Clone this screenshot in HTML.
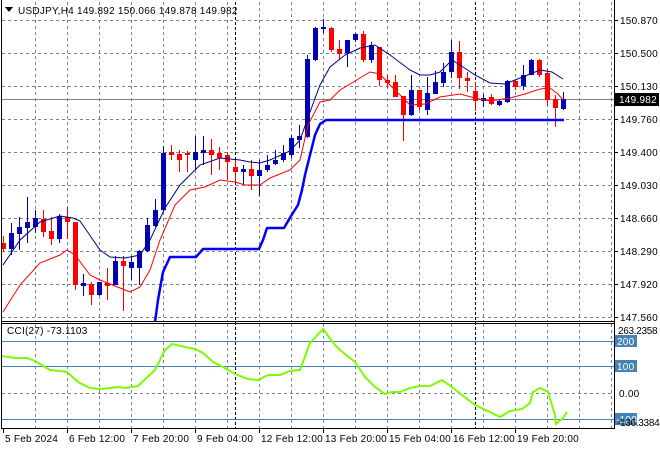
<!DOCTYPE html><html><head><meta charset="utf-8"><style>
html,body{margin:0;padding:0;background:#fff;width:660px;height:450px;overflow:hidden}
svg{display:block}
text{font-family:"Liberation Sans",sans-serif;font-size:10px;letter-spacing:0.25px;fill:#000}
text.n{letter-spacing:-0.3px}
</style></head><body>
<svg id="s" width="660" height="450" xmlns="http://www.w3.org/2000/svg" shape-rendering="crispEdges">
<rect width="660" height="450" fill="#fff"/>
<g id="grid" stroke="#7a8490" stroke-dasharray="3,3" stroke-width="1"></g>
<line x1="235.5" y1="2" x2="235.5" y2="428" stroke="#000" stroke-dasharray="3,2"/>
<line x1="475.5" y1="2" x2="475.5" y2="428" stroke="#000" stroke-dasharray="3,2"/>
<line x1="2" y1="99.5" x2="614" y2="99.5" stroke="#7a8490"/>
<g stroke="#4682b4"><line x1="2" y1="341.5" x2="614" y2="341.5"/><line x1="2" y1="366.5" x2="614" y2="366.5"/><line x1="2" y1="419.5" x2="614" y2="419.5"/></g>
<g id="candles"></g>
<g shape-rendering="auto" fill="none">
<polyline stroke="#ff0000" stroke-width="1" points="3,312 20,285 40,263 60,255 67,250 75,255 90,275 100,280 120,288 130,292 140,287 150,270 160,240 175,205 190,190 205,187 220,180 235,182 245,185 260,185 270,178 290,170 300,160 308,125 320,102 330,100 340,90 355,81 370,72 380,74 390,85 400,95 410,105 425,104 440,97 460,94 475,98 490,101 510,98 525,94 540,89 550,88 558,94 563,100"/>
<polyline stroke="#000080" stroke-width="1" points="3,265 20,240 40,222 60,216 73,218 80,221 100,250 110,257 125,258 140,255 150,240 165,208 180,185 200,165 220,158 240,160 250,162 260,163 270,160 290,151 300,140 310,112 320,85 330,67 345,55 360,48 375,45 390,55 410,70 420,75 430,75 440,72 452,60 460,65 475,75 490,83 505,84 520,78 540,70 552,72 563,79"/>
<polyline stroke="#0000ff" stroke-width="2.5" stroke-linejoin="round" points="155,322 158,300 163,272 170,257 196,257 203,249 259,249 263,240 267,228 284,228 291,216 298,205 302,190 305,175 310,155 315,135 320,124 326,120 564,120"/>
<polyline stroke="#7cfc00" stroke-width="2" points="2,356 15,358 27,358 35,361 45,367 50,370 60,371 67,372 78,382 90,388 100,389 110,388 118,387 125,388 138,386 155,370 165,350 172,344 185,347 195,349 203,353 213,362 223,367 235,374 248,379 258,380 268,375 280,375 290,371 300,370 310,343 323,329 335,345 340,350 355,362 365,377 375,387 385,394 392,392 400,392 410,388 420,386 430,386 442,380 452,387 462,395 475,405 490,412 500,417 510,411 522,409 530,403 533,392 540,388 548,392 555,415 556,424 563,418 567,412"/>
</g>
<g stroke="#000" fill="none">
<line x1="1.5" y1="0" x2="1.5" y2="429"/>
<line x1="614.5" y1="0" x2="614.5" y2="429"/>
<line x1="1" y1="321.5" x2="615" y2="321.5"/>
<line x1="1" y1="323.5" x2="615" y2="323.5"/>
<line x1="1" y1="428.5" x2="615" y2="428.5"/>
</g>
<g id="ticks" stroke="#000"></g>
<polygon points="5,7 13,7 9,12" fill="#000"/>
<text x="18" y="14">USDJPY,H4  149.892 150.066 149.878 149.982</text>
<text x="7" y="334">CCI(27) -73.1103</text>
<g id="ry"></g>
<rect x="615" y="93" width="44" height="13" fill="#000"/>
<text x="619" y="103" style="fill:#fff">149.982</text>
<text class="n" x="618" y="334">263.2358</text>
<rect x="615" y="335" width="22" height="12" fill="#4682b4"/><text x="617" y="345" style="fill:#fff">200</text>
<rect x="615" y="360" width="22" height="12" fill="#4682b4"/><text x="617" y="370" style="fill:#fff">100</text>
<text x="619" y="397">0.00</text>
<rect x="615" y="413" width="22" height="12" fill="#4682b4"/><text x="616" y="423" style="fill:#fff">-100</text>
<text class="n" x="617" y="426">-136.3384</text>
<g id="bx"></g>
</svg>
<script>
var NS="http://www.w3.org/2000/svg";
function el(p,t,a,tx){var e=document.createElementNS(NS,t);for(var k in a)e.setAttribute(k,a[k]);if(tx)e.textContent=tx;document.getElementById(p).appendChild(e);}
var xs=[35,67,99,131,163,195,227,259,291,323,355,387,419,451,483,515,547,579,611];
xs.forEach(function(x){el("grid","line",{x1:x+.5,y1:2,x2:x+.5,y2:321});el("grid","line",{x1:x+.5,y1:324,x2:x+.5,y2:428});});
var ys=[20,53,86,119,152,185,218,251,284,317];
ys.forEach(function(y){el("grid","line",{x1:2,y1:y+.5,x2:614,y2:y+.5});});
el("grid","line",{x1:2,y1:393.5,x2:614,y2:393.5});
var labs=["150.870","150.500","150.130","149.760","149.400","149.030","148.660","148.290","147.920","147.560"];
ys.forEach(function(y,i){el("ry","text",{x:620,y:y+4},labs[i]);el("ticks","line",{x1:614,y1:y+.5,x2:618,y2:y+.5});});
var bl=[[3,"5 Feb 2024"],[67,"6 Feb 12:00"],[131,"7 Feb 20:00"],[195,"9 Feb 04:00"],[259,"12 Feb 12:00"],[323,"13 Feb 20:00"],[387,"15 Feb 04:00"],[451,"16 Feb 12:00"],[515,"19 Feb 20:00"]];
bl.forEach(function(b){el("bx","text",{x:b[0]+2,y:442},b[1]);el("ticks","line",{x1:b[0]+.5,y1:428,x2:b[0]+.5,y2:433});});
var C=[[3,"r",243,249,236,252],[11,"b",233,249,223,255],[19,"b",227,234,217,250],[27,"b",222,228,197,243],[35,"b",218,227,210,233],[43,"r",219,232,210,237],[51,"r",231,239,217,245],[59,"b",216,239,214,243],[67,"r",217,222,207,239],[75,"r",222,285,222,290],[83,"b",283,286,274,296],[91,"r",284,295,282,305],[99,"b",282,295,282,296],[107,"r",283,286,268,300],[115,"b",261,285,256,285],[123,"r",261,266,256,311],[131,"b",262,268,257,280],[139,"b",251,268,250,285],[147,"b",225,251,218,252],[155,"b",210,226,199,227],[163,"b",153,210,146,211],[171,"r",152,155,145,160],[179,"r",154,160,150,172],[187,"r",153,155,151,172],[195,"b",152,160,136,170],[203,"b",150,153,136,165],[211,"r",150,155,139,175],[219,"r",153,158,147,170],[227,"r",155,162,152,180],[235,"r",167,172,160,183],[243,"b",169,172,165,185],[251,"r",169,176,160,190],[259,"b",170,176,160,196],[267,"b",165,170,155,172],[275,"b",160,164,150,165],[283,"b",153,160,145,162],[291,"b",138,155,135,158],[299,"b",136,140,125,148],[307,"b",59,137,55,138],[315,"b",28,60,27,61],[323,"b",27,29,19,33],[331,"r",28,50,27,52],[339,"r",49,54,40,60],[347,"b",40,53,40,67],[355,"b",34,40,33,42],[363,"r",34,60,31,62],[371,"b",45,60,42,63],[379,"r",47,80,47,86],[387,"r",80,83,75,88],[395,"r",82,97,75,97],[403,"r",96,115,96,141],[411,"b",90,115,75,116],[419,"r",90,107,90,110],[427,"b",93,110,77,115],[435,"b",82,94,71,94],[443,"b",72,83,63,87],[451,"b",52,72,40,78],[459,"r",52,78,41,89],[467,"r",78,81,72,92],[475,"r",91,101,82,111],[483,"b",98,101,94,107],[491,"r",97,104,94,105],[499,"b",101,105,99,106],[507,"b",81,102,80,103],[515,"r",81,87,80,90],[523,"b",75,86,65,90],[531,"b",60,75,59,75],[539,"r",60,75,59,77],[547,"r",73,100,69,106],[555,"r",99,108,95,127],[563,"b",99,109,92,110]];
C.forEach(function(c){var col=c[1]=="r"?"#ff0000":"#0000b4";
el("candles","line",{x1:c[0]+.5,y1:c[4],x2:c[0]+.5,y2:c[5],stroke:col});
el("candles","rect",{x:c[0]-2,y:c[2],width:5,height:Math.max(2,c[3]-c[2]),fill:col});});
</script>
</body></html>
